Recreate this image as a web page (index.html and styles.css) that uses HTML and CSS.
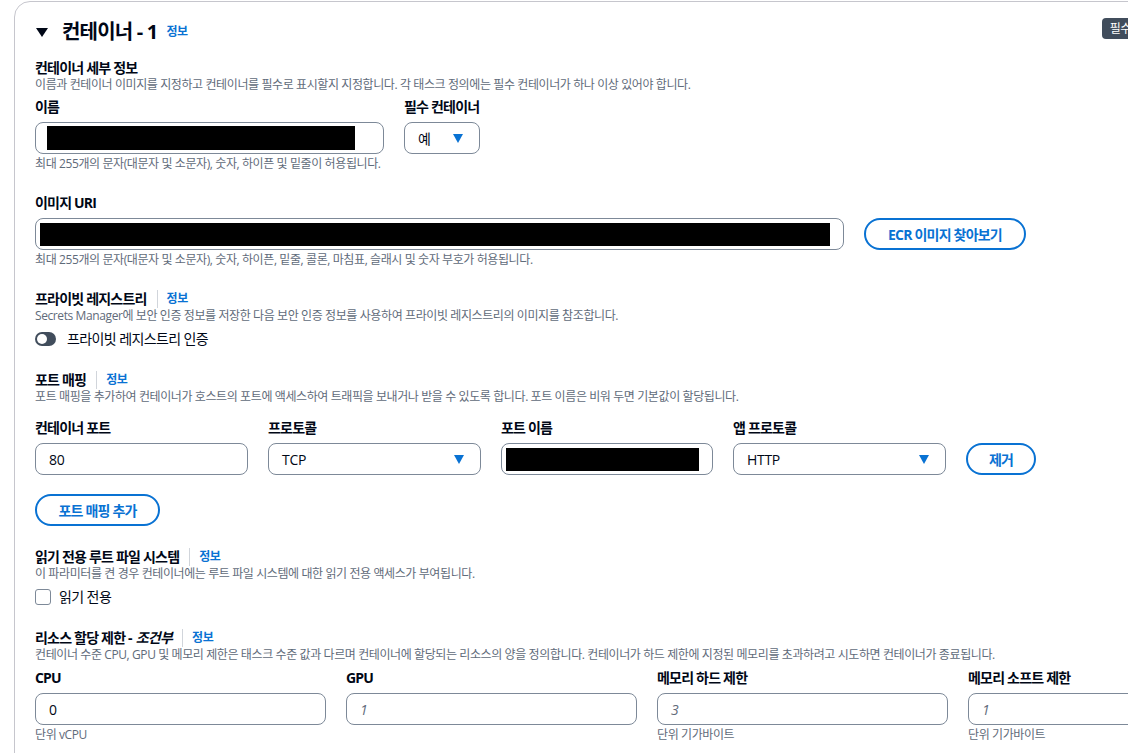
FILE: index.html
```html
<!DOCTYPE html>
<html>
  <head>
    <meta charset="utf-8">
    <title>컨테이너 - 1</title>
    <link rel="stylesheet" href="styles.css">
  </head>
  <body>
    <div class="card">
      <div class="card-header">
        <div class="card-title">
          <span class="caret-down"></span>
          <h2>컨테이너 - 1</h2>
          <a class="info" href="#">정보</a>
        </div>
        <span class="badge">필수</span>
      </div>

      <div class="section first">
        <h3>컨테이너 세부 정보</h3>
        <p class="desc">이름과 컨테이너 이미지를 지정하고 컨테이너를 필수로 표시할지 지정합니다. 각 태스크 정의에는 필수 컨테이너가 하나 이상 있어야 합니다.</p>
        <div class="row">
          <div class="field name-field">
            <label>이름</label>
            <div class="input"><span class="redact redact-name"></span></div>
            <p class="hint">최대 255개의 문자(대문자 및 소문자), 숫자, 하이픈 및 밑줄이 허용됩니다.</p>
          </div>
          <div class="field essential-field">
            <label>필수 컨테이너</label>
            <div class="input select"><span>예</span><span class="arrow"></span></div>
          </div>
        </div>
      </div>

      <div class="section">
        <div class="field">
          <label>이미지 URI</label>
          <div class="uri-row">
            <div class="input uri-input"><span class="redact redact-uri"></span></div>
            <button class="btn">ECR 이미지 찾아보기</button>
          </div>
          <p class="hint">최대 255개의 문자(대문자 및 소문자), 숫자, 하이픈, 밑줄, 콜론, 마침표, 슬래시 및 숫자 부호가 허용됩니다.</p>
        </div>
      </div>

      <div class="section">
        <h3>프라이빗 레지스트리 <span class="sep"></span><a class="info" href="#">정보</a></h3>
        <p class="desc">Secrets Manager에 보안 인증 정보를 저장한 다음 보안 인증 정보를 사용하여 프라이빗 레지스트리의 이미지를 참조합니다.</p>
        <div class="check-row">
          <span class="toggle"><span class="knob"></span></span>
          <span>프라이빗 레지스트리 인증</span>
        </div>
      </div>

      <div class="section">
        <h3>포트 매핑 <span class="sep"></span><a class="info" href="#">정보</a></h3>
        <p class="desc">포트 매핑을 추가하여 컨테이너가 호스트의 포트에 액세스하여 트래픽을 보내거나 받을 수 있도록 합니다. 포트 이름은 비워 두면 기본값이 할당됩니다.</p>
        <div class="port-grid">
          <div class="field">
            <label>컨테이너 포트</label>
            <div class="input"><span>80</span></div>
          </div>
          <div class="field">
            <label>프로토콜</label>
            <div class="input select"><span>TCP</span><span class="arrow"></span></div>
          </div>
          <div class="field">
            <label>포트 이름</label>
            <div class="input"><span class="redact redact-port"></span></div>
          </div>
          <div class="field">
            <label>앱 프로토콜</label>
            <div class="input select"><span>HTTP</span><span class="arrow"></span></div>
          </div>
          <div class="field remove">
            <button class="btn">제거</button>
          </div>
        </div>
        <div class="add-row">
          <button class="btn">포트 매핑 추가</button>
        </div>
      </div>

      <div class="section">
        <h3>읽기 전용 루트 파일 시스템 <span class="sep"></span><a class="info" href="#">정보</a></h3>
        <p class="desc">이 파라미터를 켠 경우 컨테이너에는 루트 파일 시스템에 대한 읽기 전용 액세스가 부여됩니다.</p>
        <div class="check-row">
          <span class="checkbox"></span>
          <span>읽기 전용</span>
        </div>
      </div>

      <div class="section">
        <h3>리소스 할당 제한 - <i>조건부</i> <span class="sep"></span><a class="info" href="#">정보</a></h3>
        <p class="desc">컨테이너 수준 CPU, GPU 및 메모리 제한은 태스크 수준 값과 다르며 컨테이너에 할당되는 리소스의 양을 정의합니다. 컨테이너가 하드 제한에 지정된 메모리를 초과하려고 시도하면 컨테이너가 종료됩니다.</p>
        <div class="limit-grid">
          <div class="field">
            <label>CPU</label>
            <div class="input"><span>0</span></div>
            <p class="hint">단위 vCPU</p>
          </div>
          <div class="field">
            <label>GPU</label>
            <div class="input"><span class="placeholder">1</span></div>
          </div>
          <div class="field">
            <label>메모리 하드 제한</label>
            <div class="input"><span class="placeholder">3</span></div>
            <p class="hint">단위 기가바이트</p>
          </div>
          <div class="field">
            <label>메모리 소프트 제한</label>
            <div class="input"><span class="placeholder">1</span></div>
            <p class="hint">단위 기가바이트</p>
          </div>
        </div>
      </div>
    </div>
  </body>
</html>
```

FILE: styles.css
```css
* {
  box-sizing: border-box;
}

body {
  margin: 0;
  padding: 1px 0 0 14px;
  font-family: "Open Sans", "Noto Sans CJK KR", sans-serif;
  color: #000716;
  background-color: #fff;
  overflow: hidden;
  width: 1128px;
  height: 753px;
}

h2, h3, p {
  margin: 0;
}

.card {
  width: 1146px;
  border: 1px solid #c6c6cd;
  border-radius: 16px;
  padding: 17px 20px 40px 20px;
}

.card-header {
  display: flex;
  justify-content: space-between;
  align-items: flex-start;
  height: 26px;
}

.card-title {
  display: flex;
  align-items: center;
  height: 26px;
}

.caret-down {
  width: 0;
  height: 0;
  border-left: 6.5px solid transparent;
  border-right: 6.5px solid transparent;
  border-top: 9px solid #000716;
  margin: 1px 14px 0 1px;
}

.card-title h2 {
  font-size: 20px;
  font-weight: 700;
  line-height: 26px;
  letter-spacing: -0.8px;
  margin-right: 9px;
}

.info {
  color: #0972d3;
  font-size: 12px;
  font-weight: 700;
  text-decoration: none;
  line-height: 16px;
  letter-spacing: -0.4px;
}

.badge {
  background-color: #414d5c;
  color: #fff;
  font-size: 12px;
  line-height: 21px;
  padding: 0 8px;
  border-radius: 4px;
  margin-top: -1px;
  letter-spacing: -0.4px;
}

.section {
  margin-top: 22px;
}

.section.first {
  margin-top: 14px;
}

.section h3 {
  font-size: 14px;
  font-weight: 700;
  line-height: 18px;
  letter-spacing: -0.8px;
  display: flex;
  align-items: center;
}

.section h3 i {
  margin-left: 4px;
}

.sep {
  display: inline-block;
  width: 1px;
  height: 18px;
  background-color: #d1d5db;
  margin: 0 9px 0 10px;
}

.desc {
  font-size: 12px;
  line-height: 16px;
  letter-spacing: -0.4px;
  color: #5f6b7a;
}

.row {
  display: flex;
  gap: 20px;
  margin-top: 5px;
}

.field {
  display: flex;
  flex-direction: column;
}

.field label {
  font-size: 14px;
  font-weight: 700;
  line-height: 18px;
  letter-spacing: -0.8px;
  white-space: nowrap;
  margin-bottom: 6px;
}

.name-field {
  width: 349px;
}

.name-field .hint {
  white-space: nowrap;
}

.essential-field {
  width: 76px;
}

.input {
  height: 32px;
  border: 1px solid #7d8998;
  border-radius: 8px;
  display: flex;
  align-items: center;
  padding: 0 13px;
  font-size: 14px;
  letter-spacing: -0.3px;
}

.select {
  justify-content: space-between;
}

.arrow {
  width: 0;
  height: 0;
  border-left: 5.5px solid transparent;
  border-right: 5.5px solid transparent;
  border-top: 9px solid #0972d3;
  margin-right: 3px;
}

.placeholder {
  color: #5f6b7a;
  font-style: italic;
}

.redact {
  display: block;
  background-color: #000;
}

.redact-name {
  width: 308px;
  height: 24px;
  margin-left: -2px;
}

.redact-uri {
  width: 796px;
  height: 23px;
  margin-left: -9px;
}

.redact-port {
  width: 198px;
  height: 23px;
  margin-left: -9px;
}

.hint {
  font-size: 12px;
  line-height: 16px;
  letter-spacing: -0.4px;
  color: #5f6b7a;
  margin-top: 2px;
}

.uri-row {
  display: flex;
  gap: 20px;
  align-items: center;
}

.uri-input {
  width: 809px;
}

.btn {
  font-family: "Open Sans", "Noto Sans CJK KR", sans-serif;
  height: 32px;
  padding: 0 20px;
  border: 2px solid #0972d3;
  border-radius: 20px;
  background-color: #fff;
  color: #0972d3;
  font-size: 14px;
  font-weight: 700;
  letter-spacing: -0.8px;
  white-space: nowrap;
}

.uri-row .btn {
  width: 162px;
  padding: 0;
}

.check-row {
  display: flex;
  align-items: center;
  font-size: 14px;
  line-height: 20px;
  letter-spacing: -0.6px;
  margin-top: 5px;
}

.toggle {
  width: 21px;
  height: 14px;
  border-radius: 7px;
  background-color: #414d5c;
  position: relative;
  margin-right: 11px;
}

.knob {
  position: absolute;
  left: 2px;
  top: 2px;
  width: 10px;
  height: 10px;
  border-radius: 50%;
  background-color: #fff;
}

.checkbox {
  width: 16px;
  height: 16px;
  border: 1px solid #7d8998;
  border-radius: 3px;
  margin-right: 8px;
}

.port-grid {
  display: grid;
  grid-template-columns: 213px 213px 212px 213px auto;
  gap: 20px;
  margin-top: 14px;
}

.remove {
  justify-content: flex-end;
}

.remove .btn {
  width: 70px;
  padding: 0;
}

.add-row {
  margin-top: 19px;
}

.add-row .btn {
  width: 125px;
  padding: 0;
}

.limit-grid {
  display: grid;
  grid-template-columns: 291px 291px 291px 291px;
  gap: 20px;
  margin-top: 6px;
}
```
